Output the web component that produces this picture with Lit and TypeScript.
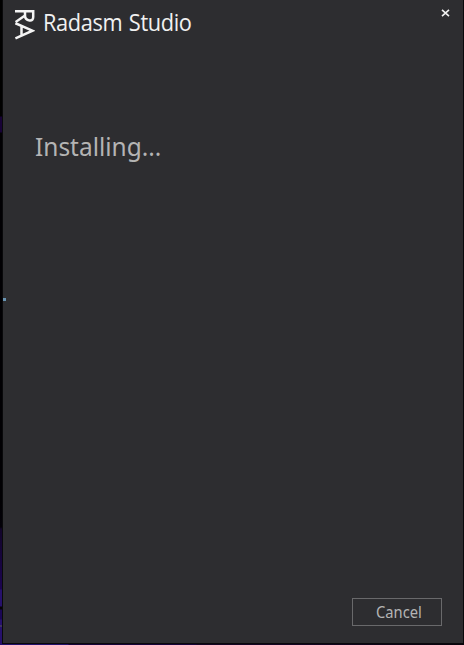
import { LitElement, html, css } from "lit";
import { customElement } from "lit/decorators.js";

@customElement("app-root")
export class AppRoot extends LitElement {
  static styles = css`
    :host { display: block; width: 464px; height: 645px; overflow: hidden; box-sizing: border-box;
      padding: 0 1px 2px 3px; position: relative;
      background: linear-gradient(90deg, #22106a 0 68px, #160338 69px 196px, #150524 197px 298px, #08030c 464px) 0 644px / 464px 1px no-repeat,
        linear-gradient(#000 0 116px, #170236 117px 132px, #010003 133px 500px, #030108 527px, #12052a 529px, #1b0450 589px, #26106c 590px 606px, #050208 607px 609px, #1a0655 610px 619px, #26106c 620px 625px, #555 626px, #26106c 627px) 0 0 / 2px 100% no-repeat,
        #09090b; }
    .window { height: 643px; box-sizing: border-box; background: #2d2d30; display: flex; flex-direction: column;
      font-family: "Noto Sans", sans-serif; padding: 0 21px 17px 12px; }
    header { display: flex; align-items: flex-start; height: 124px; }
    .logo { width: 20px; height: 32px; margin-top: 9px; flex: none; }
    .title { font: 23px/32px "Open Sans", sans-serif; color: #f1f1f1; margin: 6px 0 0 8px; flex: 1; white-space: nowrap;
      letter-spacing: -.4px; word-spacing: 1.4px; transform: scaleX(.947); transform-origin: 0 0; }
    .close { width: 9px; height: 8px; margin: 9px -8px 0 0; padding: 0; border: 0; background: none; display: block; }
    .close svg { display: block; }
    .status { margin: 0 0 0 20px; font-size: 26px; line-height: 44px; color: #b4b4b4; font-weight: 400;
      transform: scaleX(.94); transform-origin: 0 0; white-space: nowrap; }
    footer { margin-top: auto; display: flex; justify-content: flex-end; }
    .cancel { width: 90px; height: 28px; box-sizing: border-box; border: 1px solid #69696b; background: transparent; color: #b4b4b4;
      font: 16px/26px "Noto Sans", sans-serif; padding: 0 0 0 4px; }
    .cancel span { display: inline-block; transform: scaleX(.92); }
    .speck { position: absolute; left: 3px; top: 298px; width: 3px; height: 3px; background: #6893b2; }
  `;
  render() {
    return html`<div class="window">
      <header>
        <svg class="logo" viewBox="15 9 20 32" fill="none" stroke="#f4f4f4" stroke-width="2.5">
          <path d="M15 11.2H33.2V17Q33.2 20.8 29.5 20.4Q25 20 25 15.5V11.2M25 15.5L15.6 22M15.4 23.2L32.5 30.7L15.4 38.4M21.5 26V35.5" />
        </svg>
        <span class="title">Radasm Studio</span>
        <button class="close" aria-label="Close"><svg width="9" height="8" viewBox="0 0 9 8"><path d="M1 .8L8 7.2M8 .8L1 7.2" stroke="#f1f1f1" stroke-width="1.6"/></svg></button>
      </header>
      <h1 class="status">Installing...</h1>
      <footer><button class="cancel"><span>Cancel</span></button></footer>
    </div><i class="speck"></i>`;
  }
}
